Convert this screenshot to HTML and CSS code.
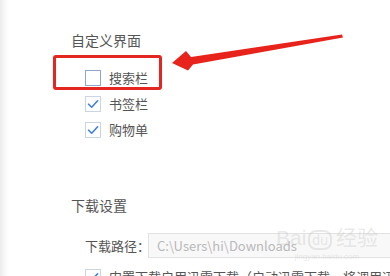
FILE: index.html
```html
<!DOCTYPE html>
<html lang="zh-CN">
<head>
<meta charset="utf-8">
<title>设置</title>
<link rel="stylesheet" href="styles.css">
</head>
<body>
<div class="page">
  <div class="section-title">自定义界面</div>
  <div class="options">
    <label class="row"><span class="box"></span><span class="label">搜索栏</span></label>
    <label class="row"><span class="box checked"><svg viewBox="0 0 16 16" width="16" height="16"><path d="M3.6 8.2 L6.7 11.2 L12.6 4.8" fill="none" stroke="#3d7fe0" stroke-width="1.6" stroke-linecap="round" stroke-linejoin="round"/></svg></span><span class="label">书签栏</span></label>
    <label class="row"><span class="box checked"><svg viewBox="0 0 16 16" width="16" height="16"><path d="M3.6 8.2 L6.7 11.2 L12.6 4.8" fill="none" stroke="#3d7fe0" stroke-width="1.6" stroke-linecap="round" stroke-linejoin="round"/></svg></span><span class="label">购物单</span></label>
  </div>
  <div class="section-title second">下载设置</div>
  <div class="path-row">
    <span class="path-label">下载路径：</span>
    <div class="path-input">C:\Users\hi\Downloads</div>
  </div>
  <label class="row last"><span class="box checked"><svg viewBox="0 0 16 16" width="16" height="16"><path d="M3.6 8.2 L6.7 11.2 L12.6 4.8" fill="none" stroke="#3d7fe0" stroke-width="1.6" stroke-linecap="round" stroke-linejoin="round"/></svg></span><span class="label">内置下载启用迅雷下载（启动迅雷下载，将调用迅雷下载）</span></label>
</div>
<div class="highlight"></div>
<svg class="arrow" width="390" height="276" viewBox="0 0 390 276">
  <polygon points="172,63 186,51 191,57 342,34.5 343,37.5 193,64.5 188,70.5" fill="#e8231b"/>
</svg>
<div class="watermark"><span class="wm-main">Bai<span class="wm-du">du</span>经验</span><span class="wm-sub">jingyan.baidu.com</span></div>
</body>
</html>
```
FILE: styles.css
```css
html, body {
  margin: 0;
  padding: 0;
}
body {
  width: 390px;
  height: 276px;
  overflow: hidden;
  position: relative;
  background: linear-gradient(to right, #ececec 0px, #f6f6f6 4px, #ffffff 9px);
  font-family: "Noto Sans CJK SC", "Microsoft YaHei", sans-serif;
  color: #555;
}
.page {
  padding: 30px 0 0 71px;
  overflow: hidden;
  width: 319px;
  height: 246px;
}
.section-title {
  font-size: 14px;
  line-height: 20px;
  height: 20px;
  color: #555;
}
.section-title.second {
  margin-top: 52px;
}
.options {
  margin-top: 15px;
  display: flex;
  flex-direction: column;
}
.row {
  display: flex;
  align-items: center;
  height: 26px;
  padding-left: 14px;
  gap: 8px;
}
.box {
  width: 14px;
  height: 14px;
  border: 1px solid #8ea7c9;
  background: #fff;
  position: relative;
  flex: none;
}
.box.checked {
  border-color: #cbd4e0;
}
.box svg {
  position: absolute;
  left: -1px;
  top: -1px;
}
.label {
  font-size: 13px;
  line-height: 16px;
  color: #555;
  white-space: nowrap;
}
.path-row {
  margin-top: 18px;
  display: flex;
  align-items: center;
  height: 25px;
  padding-left: 14px;
}
.path-label {
  font-size: 13px;
  width: 63px;
  color: #555;
  white-space: nowrap;
}
.path-input {
  box-sizing: border-box;
  flex: none;
  width: 260px;
  height: 25px;
  border: 1px solid #e2e2e2;
  background: #f8f8f8;
  color: #b8b8b8;
  font-size: 13px;
  line-height: 23px;
  padding-left: 8px;
  white-space: nowrap;
}
.row.last {
  margin-top: 6px;
}
.highlight {
  position: absolute;
  left: 53px;
  top: 55px;
  width: 103px;
  height: 29px;
  border: 3px solid #e5251f;
  border-radius: 3px;
}
.arrow {
  position: absolute;
  left: 0;
  top: 0;
}
.watermark {
  position: absolute;
  left: 276px;
  top: 226px;
  display: flex;
  flex-direction: column;
  align-items: center;
  color: rgba(200, 200, 200, 0.4);
  pointer-events: none;
}
.wm-main {
  font-family: "Liberation Sans", sans-serif;
  font-size: 21px;
  line-height: 24px;
  white-space: nowrap;
}
.wm-du {
  font-size: 14px;
  border: 2px solid rgba(200, 200, 200, 0.4);
  border-radius: 8px;
  padding: 0 2px;
  margin: 0 4px 0 2px;
}
.wm-sub {
  font-family: "Liberation Sans", sans-serif;
  font-size: 8px;
  line-height: 9px;
  white-space: nowrap;
}
```
